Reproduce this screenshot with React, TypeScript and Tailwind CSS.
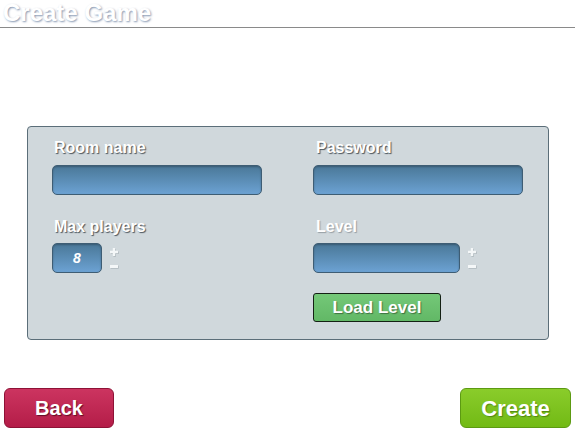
import React from "react";

const labelCls =
  "text-[16px] font-bold leading-[18px] text-white [text-shadow:1px_1px_1px_rgba(30,40,50,0.75)]";
const inputCls =
  "h-[30px] rounded-[5px] border border-[#3e5d74] bg-gradient-to-b from-[#4a7898] to-[#6ca2d3] shadow-[inset_0_1px_2px_rgba(0,0,0,0.25)]";

function PlusMinus() {
  return (
    <svg width="11" height="26" viewBox="0 0 11 26" className="ml-[7px] mt-[4px]">
      <g opacity="0.5" transform="translate(0.7,0.7)">
        <path d="M1 5 H9 M5 1 V9" stroke="#8a969c" strokeWidth="2.4" />
        <rect x="1" y="18" width="8" height="3" fill="#8a969c" />
      </g>
      <path d="M1 5 H9 M5 1 V9" stroke="#f4f7f8" strokeWidth="2.4" />
      <rect x="1" y="18" width="8" height="3" fill="#f4f7f8" />
    </svg>
  );
}

export default function App() {
  return (
    <div
      className="w-[575px] h-[428px] bg-white overflow-hidden flex flex-col"
      style={{ fontFamily: '"Liberation Sans", Arial, sans-serif' }}
    >
      <div className="h-[28px] border-b border-[#8a8a8a] pl-[3px] flex items-start">
        <span className="text-[24px] font-bold leading-[25px] text-white [text-shadow:1px_1px_2px_rgba(120,140,170,0.9)]">
          Create Game
        </span>
      </div>

      <div className="mt-[98px] ml-[27px] w-[522px] h-[214px] rounded-[4px] border border-[#5b6e79] bg-[#d0d8dc] pl-[24px] pt-[12px]">
        <div className="flex gap-[51px]">
          <div className="w-[210px] flex flex-col">
            <div className={labelCls + " pl-[2px]"}>Room name</div>
            <div className={inputCls + " mt-[8px] w-[210px]"} />
            <div className={labelCls + " pl-[2px] mt-[23px]"}>Max players</div>
            <div className="flex mt-[7px]">
              <div className={inputCls + " w-[50px] flex items-center justify-center"}>
                <span className="text-[14px] font-bold italic text-white">8</span>
              </div>
              <PlusMinus />
            </div>
          </div>
          <div className="w-[210px] flex flex-col">
            <div className={labelCls + " pl-[3px]"}>Password</div>
            <div className={inputCls + " mt-[8px] w-[210px]"} />
            <div className={labelCls + " pl-[3px] mt-[23px] [text-shadow:1px_1px_1px_rgba(40,50,60,0.35)]"}>Level</div>
            <div className="flex mt-[7px]">
              <div className={inputCls + " w-[147px]"} />
              <PlusMinus />
            </div>
            <button className="mt-[20px] w-[128px] h-[29px] rounded-[3px] border border-[#142014] bg-gradient-to-b from-[#74c878] to-[#62b866] text-[17px] font-bold text-white leading-none [text-shadow:1px_1px_1px_rgba(0,0,0,0.4)]">
              Load Level
            </button>
          </div>
        </div>
      </div>

      <div className="mt-[48px] flex justify-between pl-[4px] pr-[4px]">
        <button className="w-[110px] h-[40px] rounded-[6px] border border-[#8e1236] bg-gradient-to-b from-[#cc3460] to-[#b41c48] text-[20px] font-bold text-white [text-shadow:1px_1px_1px_rgba(60,0,20,0.7)]">
          Back
        </button>
        <button className="w-[111px] h-[40px] rounded-[6px] border border-[#5c9a12] bg-gradient-to-b from-[#8acc2a] to-[#72ba14] text-[22px] font-bold text-white [text-shadow:1px_1px_1px_rgba(40,80,0,0.5)]">
          Create
        </button>
      </div>
    </div>
  );
}
